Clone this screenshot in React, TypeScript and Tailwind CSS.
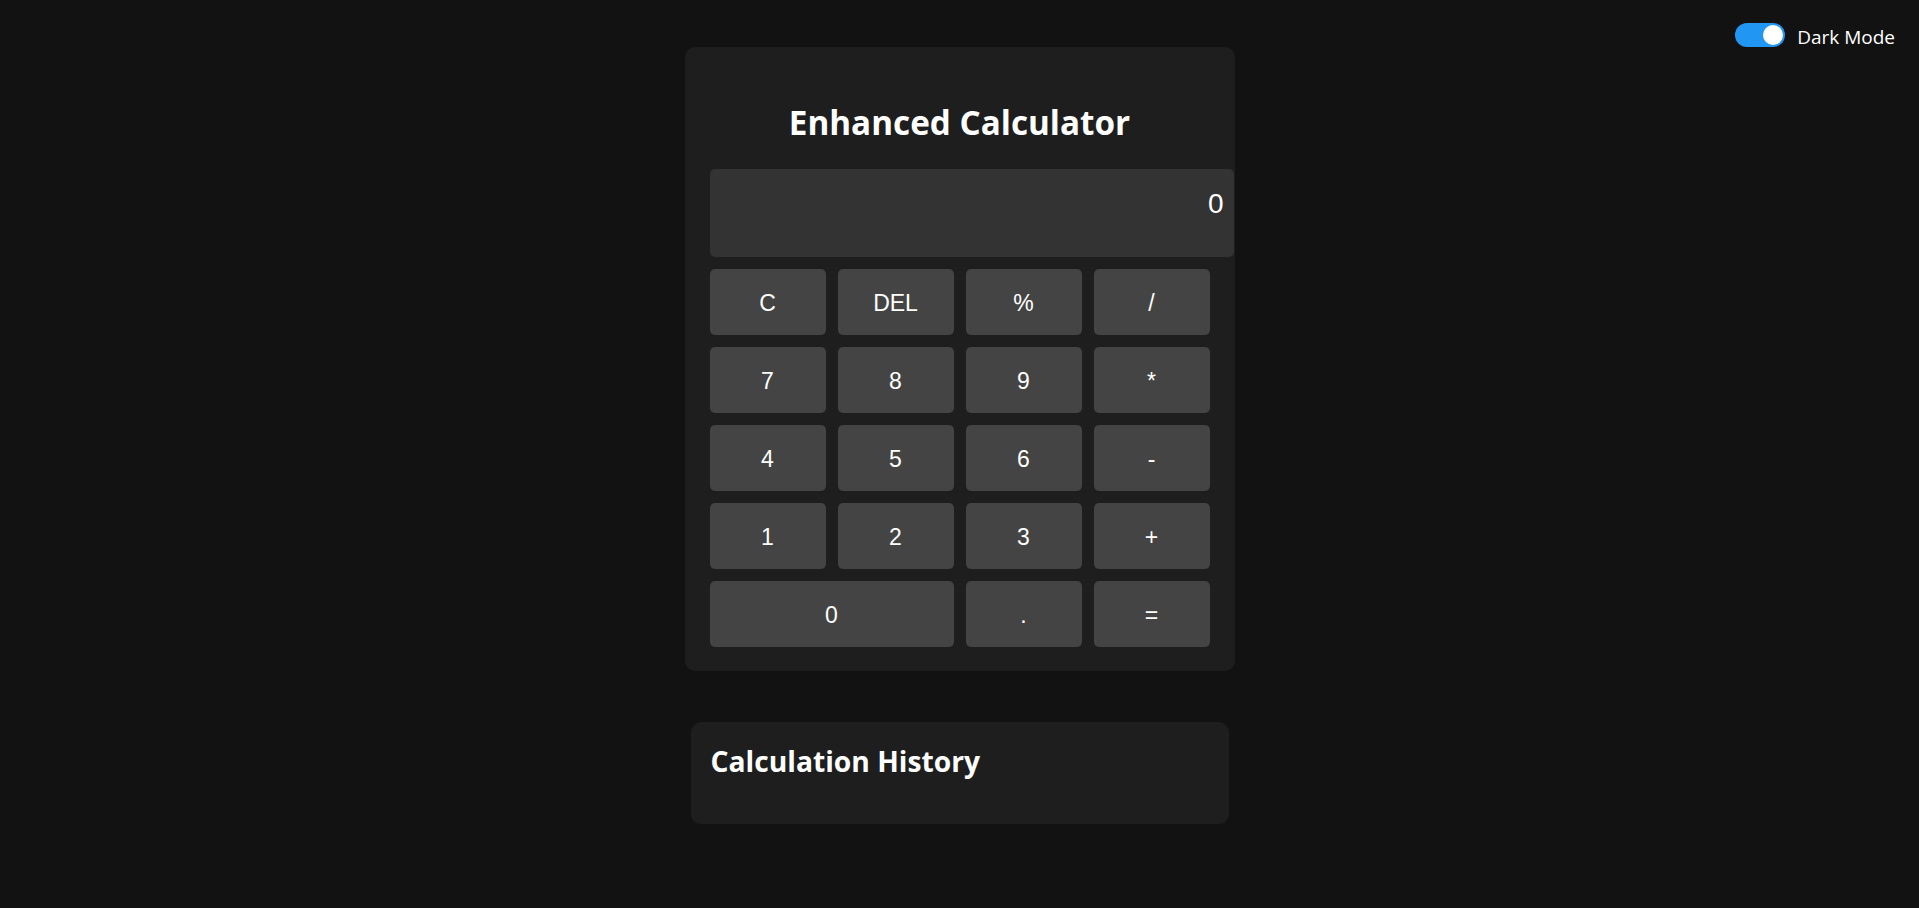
import React from "react";

const keys: { label: string; wide?: boolean }[] = [
  { label: "C" }, { label: "DEL" }, { label: "%" }, { label: "/" },
  { label: "7" }, { label: "8" }, { label: "9" }, { label: "*" },
  { label: "4" }, { label: "5" }, { label: "6" }, { label: "-" },
  { label: "1" }, { label: "2" }, { label: "3" }, { label: "+" },
  { label: "0", wide: true }, { label: "." }, { label: "=" },
];

export default function App() {
  return (
    <div className="relative min-h-[908px] w-full bg-[#121212] text-white font-['Open_Sans',sans-serif]">
      <div className="absolute top-[23px] right-[24px] flex items-start gap-[12px]">
        <div className="relative h-[24px] w-[50px] rounded-full bg-[#2196f3]">
          <div className="absolute top-[2px] right-[2px] h-[20px] w-[20px] rounded-full bg-white" />
        </div>
        <span className="mt-[2px] text-[19px] leading-[24px] text-white">Dark Mode</span>
      </div>

      <div className="flex flex-col items-center pt-[47px]">
        <div className="w-[550px] rounded-[10px] bg-[#1e1e1e] px-[25px] pt-[24px] pb-[24px]">
          <h1 className="mt-[31px] mb-[27px] text-center text-[33.25px] font-bold leading-[40px] text-white">
            Enhanced Calculator
          </h1>
          <div className="h-[88px] w-[524px] rounded-[5px] bg-[#333333] pt-[19px] pr-[10px] text-right font-['Liberation_Sans',Arial,sans-serif] text-[28px] leading-[32px] text-white">
            0
          </div>
          <div className="mt-[12px] grid grid-cols-[repeat(4,116px)] gap-[12px]">
            {keys.map((k) => (
              <button
                key={k.label}
                className={`flex h-[66px] items-center justify-center rounded-[5px] bg-[#444444] pt-[2px] font-['Liberation_Sans',Arial,sans-serif] text-[23px] text-white ${k.wide ? "col-span-2" : ""}`}
              >
                {k.label}
              </button>
            ))}
          </div>
        </div>

        <div className="mt-[51px] w-[538px] rounded-[10px] bg-[#1e1e1e] px-[20px] pt-[21px] pb-[45px]">
          <h2 className="text-[28.25px] font-bold leading-[36px] text-white">Calculation History</h2>
        </div>
      </div>
    </div>
  );
}
